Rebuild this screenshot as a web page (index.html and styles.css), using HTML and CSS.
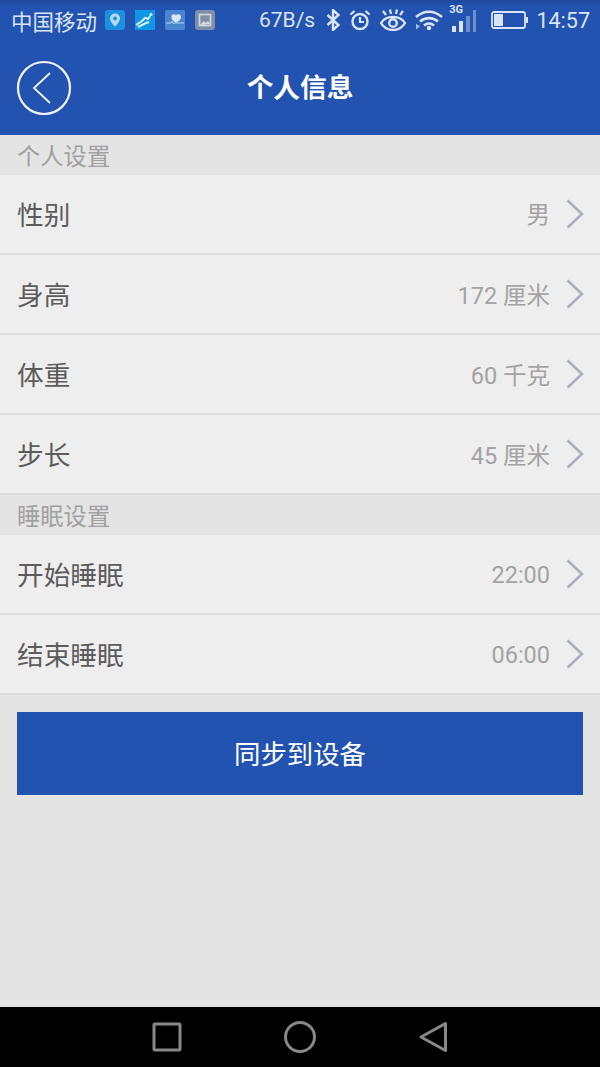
FILE: index.html
```html
<!DOCTYPE html>
<html>
<head>
  <meta charset="UTF-8">
  <title>个人信息</title>
  <link rel="stylesheet" href="styles.css">
</head>
<body>
  <div class="screen">
    <div class="top">
      <div class="status">
        <span class="carrier">中国移动</span>
        <svg class="app-icon" viewBox="0 0 20 20"><rect width="20" height="20" rx="3" fill="#1c8fe0"/><path d="M10 3.500a5 5 0 0 0-5 5C5 12 10 16.500 10 16.500s5-4.500 5-8a5 5 0 0 0-5-5z" fill="#b9d9f2"/><circle cx="10" cy="8.500" r="2" fill="#1c8fe0"/></svg>
        <svg class="app-icon" viewBox="0 0 20 20"><rect width="20" height="20" fill="#0f96e6"/><path d="M1 15l6-4 3-3 3 1 2-3M3 17l8-4 3-1" fill="none" stroke="#d8eefb" stroke-width="2"/><circle cx="16" cy="4.500" r="1.500" fill="#d8eefb"/></svg>
        <svg class="app-icon" viewBox="0 0 20 20"><rect width="20" height="20" rx="2" fill="#4a86cf"/><path d="M11 13C8 11 6.500 9.500 6.500 7 6.500 4 9.800 3.500 11 5.500 12.200 3.500 16 4 16 7 16 9.500 14 11 11 13z" fill="#dbe8f6"/><path d="M1 13h5l1-2 1.500 3 1-1h9.500" fill="none" stroke="#b5d0ec" stroke-width="1"/></svg>
        <svg class="app-icon" viewBox="0 0 20 20"><rect width="20" height="20" rx="3" fill="#7f8fa6"/><rect x="4.500" y="4.500" width="11" height="11" fill="none" stroke="#d5dbe3" stroke-width="1.600"/><path d="M5 15l4-4 2 2 2-2 2 3z" fill="#d5dbe3"/></svg>
        <span class="speed">67B/s</span>
        <svg class="bt" viewBox="0 0 14 22"><path d="M1.500 6l11 10L7 21V1l5.500 5-11 10" fill="none" stroke="#d9e4f4" stroke-width="2.400"/></svg>
        <svg class="alarm" viewBox="0 0 22 22"><circle cx="11" cy="12.500" r="7.500" fill="none" stroke="#d9e4f4" stroke-width="2.400"/><path d="M11 8V13H15M1.500 5.500l4-3.500M20.500 5.500l-4-3.500" fill="none" stroke="#d9e4f4" stroke-width="2.200"/></svg>
        <svg class="eye" viewBox="0 0 28 22"><path d="M2 14c3-5 7-6 12-6s9 1 12 6c-3 5-7 7-12 7s-9-2-12-7z" fill="none" stroke="#d9e4f4" stroke-width="2.400"/><circle cx="14" cy="14" r="3.800" fill="none" stroke="#d9e4f4" stroke-width="2.400"/><path d="M4 2l3 4M11 0.500l1 4.500M18 0.500l-1 4.500M24 2l-3 4" fill="none" stroke="#d9e4f4" stroke-width="2.200"/></svg>
        <svg class="wifi" viewBox="0 0 28 20"><path d="M1 7c8-7 18-7 26 0M5 11.500c5.500-4.500 12.500-4.500 18 0M9 15.500c3-2.500 7-2.500 10 0" fill="none" stroke="#d9e4f4" stroke-width="2.600"/><circle cx="14" cy="18" r="2.200" fill="#d9e4f4"/><path d="M1 13.500l4 3-4 3z" fill="#9db6de"/></svg>
        <span class="signal">
          <span class="net">3G</span>
          <svg class="bars" viewBox="0 0 26 22"><path d="M1 16h4v6H1zM8 11h4v11H8z" fill="#d9e4f4"/><path d="M15 6h4v16h-4zM22 0h3v22h-3z" fill="#6d8fc9"/></svg>
        </span>
        <svg class="battery" viewBox="0 0 37 18"><rect x="1" y="1" width="33" height="16" rx="2" fill="none" stroke="#d9e4f4" stroke-width="1.800"/><rect x="3" y="3" width="9" height="12" fill="#d9e4f4"/><rect x="35" y="6" width="2" height="6" fill="#d9e4f4"/></svg>
        <span class="clock">14:57</span>
      </div>
      <div class="header">
        <svg class="back" viewBox="0 0 56 56"><circle cx="28" cy="28" r="26" fill="none" stroke="#f2f5fb" stroke-width="2.200"/><path d="M34 13L18 28l16 15" fill="none" stroke="#f2f5fb" stroke-width="1.800"/></svg>
        <h1>个人信息</h1>
      </div>
    </div>

    <div class="content">
      <div class="section">个人设置</div>
      <div class="row"><span class="name">性别</span><span class="value gender">男</span><svg class="chevron" viewBox="0 0 18 30"><path d="M1.500 1.500L16 15 1.500 28.500" /></svg></div>
      <div class="row"><span class="name">身高</span><span class="value">172 厘米</span><svg class="chevron" viewBox="0 0 18 30"><path d="M1.500 1.500L16 15 1.500 28.500" /></svg></div>
      <div class="row"><span class="name">体重</span><span class="value">60 千克</span><svg class="chevron" viewBox="0 0 18 30"><path d="M1.500 1.500L16 15 1.500 28.500" /></svg></div>
      <div class="row"><span class="name">步长</span><span class="value">45 厘米</span><svg class="chevron" viewBox="0 0 18 30"><path d="M1.500 1.500L16 15 1.500 28.500" /></svg></div>
      <div class="section">睡眠设置</div>
      <div class="row"><span class="name">开始睡眠</span><span class="value time">22:00</span><svg class="chevron" viewBox="0 0 18 30"><path d="M1.500 1.500L16 15 1.500 28.500" /></svg></div>
      <div class="row"><span class="name">结束睡眠</span><span class="value time">06:00</span><svg class="chevron" viewBox="0 0 18 30"><path d="M1.500 1.500L16 15 1.500 28.500" /></svg></div>
      <div class="sync">同步到设备</div>
    </div>

    <div class="navbar">
      <svg class="nav-icon" viewBox="0 0 32 32"><rect x="3" y="3" width="26" height="26" rx="1"/></svg>
      <svg class="nav-icon" viewBox="0 0 32 32"><circle cx="16" cy="16" r="14.500"/></svg>
      <svg class="nav-icon" viewBox="0 0 32 32"><path d="M28.500 2.500v27L4 16z"/></svg>
    </div>
  </div>
</body>
</html>
```
FILE: styles.css
```css
body {
  margin: 0;
  font-family: Roboto, "Noto Sans CJK SC", sans-serif;
  overflow: hidden;
}
.screen {
  display: flex;
  flex-direction: column;
  height: 1067px;
  width: 600px;
  background-color: #e4e4e4;
}
.top {
  height: 135px;
  background: linear-gradient(#1e4a9e, #2353b0 8px);
  flex-shrink: 0;
}
.status {
  display: flex;
  align-items: center;
  height: 40px;
  padding: 0 10px 0 11px;
  color: #d9e4f4;
  font-size: 21.500px;
}
.carrier {
  width: 94px;
}
.app-icon {
  width: 20px;
  height: 20px;
  margin-right: 10px;
}
.speed {
  margin-left: 34px;
  font-size: 21px;
}
.bt {
  width: 14px;
  height: 22px;
  margin-left: 11px;
}
.alarm {
  width: 22px;
  height: 22px;
  margin-left: 9px;
}
.eye {
  width: 28px;
  height: 22px;
  margin-left: 8px;
}
.wifi {
  width: 28px;
  height: 20px;
  margin-left: 8px;
}
.signal {
  display: flex;
  position: relative;
  align-items: flex-end;
  width: 26px;
  height: 24px;
  margin-left: 8px;
}
.net {
  position: absolute;
  top: -5px;
  left: -2px;
  font-size: 11px;
  font-weight: 700;
}
.bars {
  width: 26px;
  height: 22px;
}
.battery {
  width: 37px;
  height: 18px;
  margin-left: 14px;
}
.clock {
  margin-left: auto;
  font-size: 21.500px;
}
.header {
  display: flex;
  position: relative;
  align-items: center;
  justify-content: center;
  height: 95px;
}
.header h1 {
  margin: 0 0 5px;
  color: #fff;
  font-size: 26.700px;
  font-weight: 700;
}
.back {
  position: absolute;
  top: 20px;
  left: 16px;
  width: 56px;
  height: 56px;
}
.content {
  flex: 1;
}
.section {
  box-sizing: border-box;
  height: 40px;
  padding: 2px 0 0 17px;
  color: #a0a0a0;
  font-size: 23.300px;
  line-height: 40px;
}
.row {
  display: flex;
  align-items: center;
  box-sizing: border-box;
  height: 80px;
  padding: 0 16px 0 17px;
  background-color: #eee;
  border-bottom: 2px solid #dcdcdc;
}
.name {
  flex: 1;
  margin-bottom: 2px;
  color: #5c5c5c;
  font-size: 26.700px;
}
.value {
  color: #a3a3a3;
  font-size: 23.500px;
}
.gender {
  margin-bottom: 2px;
}
.time {
  margin-top: 2px;
}
.chevron {
  width: 18px;
  height: 30px;
  margin-left: 16px;
  fill: none;
  stroke: #a9adbd;
  stroke-width: 2.500;
}
.sync {
  height: 83px;
  margin: 17px 17px 0;
  background-color: #2353b0;
  color: #fff;
  font-size: 26.400px;
  line-height: 86px;
  text-align: center;
}
.navbar {
  display: flex;
  align-items: center;
  justify-content: center;
  gap: 101px;
  height: 60px;
  background-color: #000;
  flex-shrink: 0;
}
.nav-icon {
  width: 32px;
  height: 32px;
  fill: none;
  stroke: #888;
  stroke-width: 3;
  stroke-linejoin: round;
}
```
